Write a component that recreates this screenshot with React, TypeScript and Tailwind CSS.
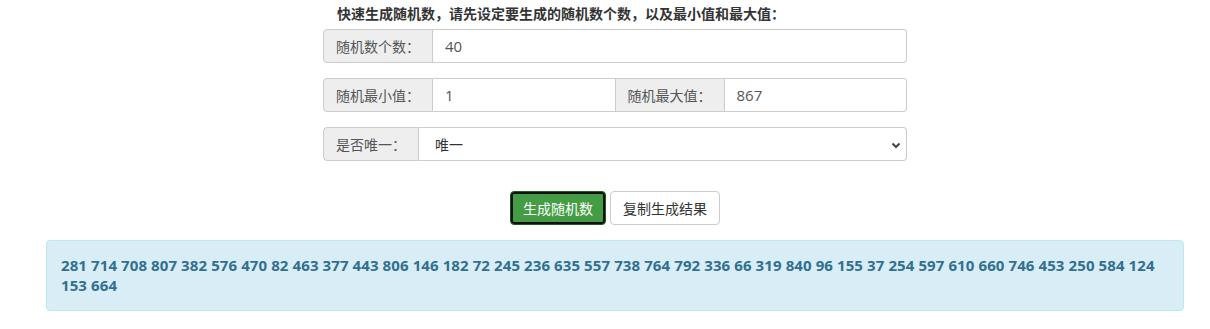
import React from "react";

const font = { fontFamily: '"Open Sans", "Noto Sans CJK SC", sans-serif' };

const nums =
  "281 714 708 807 382 576 470 82 463 377 443 806 146 182 72 245 236 635 557 738 764 792 336 66 319 840 96 155 37 254 597 610 660 746 453 250 584 124 153 664";

function Addon({ children, left = false }: { children: React.ReactNode; left?: boolean }) {
  return (
    <span
      className={
        "flex items-center shrink-0 bg-[#eeeeee] border border-[#cccccc] px-[12px] text-[14px] text-[#555555] whitespace-nowrap " +
        (left ? "rounded-l-[4px]" : "")
      }
    >
      {children}
    </span>
  );
}

export default function App() {
  return (
    <div className="w-[1210px] h-[329px] bg-white pl-[20px] flex flex-col items-center" style={font}>
      <div className="w-[584px] flex flex-col">
        <div className="pt-[4px] pl-[14px] h-[24px] mb-[5px] text-[14px] leading-[20px] font-bold text-[#333333] whitespace-nowrap">
          快速生成随机数，请先设定要生成的随机数个数，以及最小值和最大值：
        </div>
        <div className="flex h-[34px] mb-[15px]">
          <Addon left>随机数个数：</Addon>
          <input
            readOnly
            value="40"
            className="flex-1 min-w-0 border border-l-0 border-[#cccccc] rounded-r-[4px] px-[12px] text-[15px] text-[#555555] outline-none"
            style={font}
          />
        </div>
        <div className="flex h-[34px] mb-[15px]">
          <Addon left>随机最小值：</Addon>
          <input
            readOnly
            value="1"
            className="flex-1 min-w-0 border border-l-0 border-[#cccccc] px-[12px] text-[15px] text-[#555555] outline-none"
            style={font}
          />
          <span className="flex items-center shrink-0 bg-[#eeeeee] border border-l-0 border-[#cccccc] px-[12px] text-[14px] text-[#555555] whitespace-nowrap">
            随机最大值：
          </span>
          <input
            readOnly
            value="867"
            className="flex-1 min-w-0 border border-l-0 border-[#cccccc] rounded-r-[4px] px-[12px] text-[15px] text-[#555555] outline-none"
            style={font}
          />
        </div>
        <div className="flex h-[34px]">
          <Addon left>是否唯一：</Addon>
          <div className="relative flex-1 flex items-center border border-l-0 border-[#cccccc] rounded-r-[4px] pl-[16px] text-[14px] text-[#333333]">
            唯一
            <svg
              className="absolute right-[5px] top-[14px]"
              width="10"
              height="7"
              viewBox="0 0 10 7"
            >
              <path d="M1.5 1.5 L5 5 L8.5 1.5" fill="none" stroke="#444" strokeWidth="2" />
            </svg>
          </div>
        </div>
      </div>
      <div className="flex gap-[4px] mt-[30px] mb-[15px] h-[34px]">
        <button className="h-[34px] px-[12px] rounded-[4px] bg-[#449d44] border border-[#255625] text-white text-[14px] shadow-[inset_0_0_0_2px_#111]">
          生成随机数
        </button>
        <button className="h-[34px] px-[12px] rounded-[4px] bg-white border border-[#cccccc] text-[#333333] text-[14px]">
          复制生成结果
        </button>
      </div>
      <div className="w-[1138px] min-h-[71px] bg-[#d9edf7] border border-[#bce8f1] rounded-[4px] px-[14px] py-[14px] text-[15px] tracking-[0.1px] leading-[20px] font-bold text-[#31708f]">
        {nums}
      </div>
    </div>
  );
}
